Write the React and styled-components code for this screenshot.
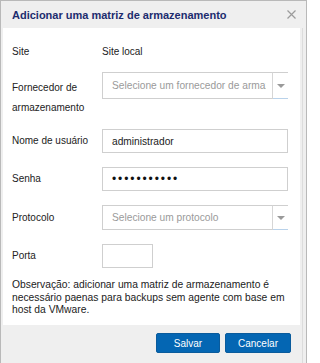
import React from "react";
import styled, { createGlobalStyle } from "styled-components";

const Global = createGlobalStyle`
  html, body { margin: 0; padding: 0; background: #ffffff; }
  body { font-family: "Liberation Sans", Arial, sans-serif; }
  * { box-sizing: border-box; }
`;

const Dialog = styled.div`
  width: 307px;
  height: 363px;
  background: #efefef;
  border: 1px solid #b9b9b9;
  border-bottom: none;
  display: flex;
  flex-direction: column;
`;

const Header = styled.div`
  height: 27px;
  display: flex;
  align-items: center;
  justify-content: space-between;
  padding: 0 10px 0 11px;
`;

const Title = styled.h1`
  margin: 0;
  font-size: 11px;
  font-weight: bold;
  color: #1c2c6e;
  line-height: 14px;
`;

const Close = styled.button`
  border: none;
  background: none;
  padding: 0;
  width: 10px;
  height: 10px;
  display: flex;
  align-items: center;
  justify-content: center;
  cursor: pointer;
`;

const Frame = styled.div`
  display: flex;
  flex: 1;
  flex-direction: column;
  margin-left: 2px;
  margin-right: 3px;
  border-right: 1px solid #dcdcdc;
  padding-right: 2px;
`;

const Body = styled.div`
  background: #ffffff;
  height: 297px;
  padding: 14px 10px 0 9px;
  display: flex;
  flex-direction: column;
`;

const Row = styled.div`
  display: flex;
  align-items: flex-start;
  margin-top: ${(p) => p.$mt || 0}px;
`;

const Label = styled.div`
  width: 90px;
  flex: none;
  font-size: 10px;
  color: #222;
  line-height: ${(p) => p.$lh || 20}px;
  padding-top: ${(p) => p.$pt || 0}px;
`;

const Value = styled.div`
  font-size: 10px;
  color: #222;
  line-height: 20px;
`;

const Input = styled.div`
  width: ${(p) => p.$w || 186}px;
  height: ${(p) => p.$h || 24}px;
  border: 1px solid #cfcfcf;
  background: #fff;
  padding-left: 9px;
  display: flex;
  align-items: center;
  font-size: 10.2px;
  color: #222;
  font-family: "Liberation Sans", Arial, sans-serif;
`;

const Dots = styled.span`
  font-size: 12px;
  letter-spacing: 1.9px;
  color: #111;
  font-family: "Liberation Sans", Arial, sans-serif;
`;

const Select = styled.div`
  width: 186px;
  height: ${(p) => p.$h || 27}px;
  display: flex;
`;

const SelectText = styled.div`
  flex: 1;
  border: 1px solid #cfcfcf;
  border-right: 1px solid #d6d6d6;
  padding-left: 9px;
  display: flex;
  align-items: center;
  overflow: hidden;
  white-space: nowrap;
  font-size: 10.2px;
  color: #9a9a9a;
`;

const Clip = styled.span`
  display: block;
  width: ${(p) => p.$w}px;
  overflow: hidden;
  white-space: nowrap;
`;

const Arrow = styled.div`
  width: 15px;
  flex: none;
  border-top: 1px solid #cfcfcf;
  border-bottom: 1px solid #b9d2ea;
  display: flex;
  align-items: center;
  justify-content: center;
  &::after {
    content: "";
    border-left: 4px solid transparent;
    border-right: 4px solid transparent;
    border-top: 4px solid #9a9a9a;
    margin-left: 1px;
  }
`;

const Note = styled.p`
  margin: 11px 0 0 0;
  font-size: 10.3px;
  line-height: 12.5px;
  color: #222;
`;

const Footer = styled.div`
  flex: 1;
  display: flex;
  justify-content: flex-end;
  align-items: flex-start;
  gap: 5px;
  padding: 8px 9px 0 0;
  background: #efefef;
`;

const Button = styled.button`
  width: ${(p) => p.$w}px;
  height: 20px;
  background: #0466b3;
  border: 1px solid #0a5b9c;
  border-radius: 2px;
  color: #fff;
  font-family: "Liberation Sans", Arial, sans-serif;
  font-size: 10px;
  padding: 0;
  cursor: pointer;
`;

export default function App() {
  return (
    <>
      <Global />
      <Dialog>
        <Header>
          <Title>Adicionar uma matriz de armazenamento</Title>
          <Close aria-label="Fechar">
            <svg width="9" height="9" viewBox="0 0 9 9">
              <path d="M0.5 0.5 L8.5 8.5 M8.5 0.5 L0.5 8.5" stroke="#9b9b9b" strokeWidth="1.2" />
            </svg>
          </Close>
        </Header>
        <Frame>
          <Body>
            <Row>
              <Label>Site</Label>
              <Value>Site local</Value>
            </Row>
            <Row $mt={10}>
              <Label $pt={6}>
                Fornecedor de
                <br />
                armazenamento
              </Label>
              <Select $h={27}>
                <SelectText>
                  <Clip $w={154}>Selecione um fornecedor de armazenamento</Clip>
                </SelectText>
                <Arrow />
              </Select>
            </Row>
            <Row $mt={11}>
              <Label $lh={24}>Nome de usuário</Label>
              <Input>administrador</Input>
            </Row>
            <Row $mt={14}>
              <Label $lh={24}>Senha</Label>
              <Input>
                <Dots>•••••••••••</Dots>
              </Input>
            </Row>
            <Row $mt={14}>
              <Label $lh={25}>Protocolo</Label>
              <Select $h={25}>
                <SelectText>Selecione um protocolo</SelectText>
                <Arrow />
              </Select>
            </Row>
            <Row $mt={14}>
              <Label $lh={24}>Porta</Label>
              <Input $w={51} />
            </Row>
            <Note>
              Observação: adicionar uma matriz de armazenamento é necessário paenas para backups sem agente com base em host da VMware.
            </Note>
          </Body>
          <Footer>
            <Button $w={64}>Salvar</Button>
            <Button $w={66}>Cancelar</Button>
          </Footer>
        </Frame>
      </Dialog>
    </>
  );
}
